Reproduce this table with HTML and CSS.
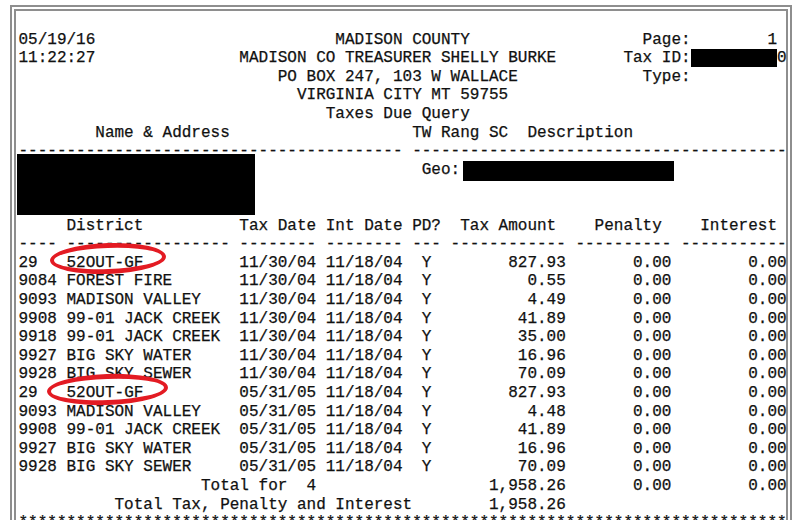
FILE: index.html
```html
<!DOCTYPE html>
<html lang="en">
<head>
<meta charset="utf-8">
<title>Taxes Due Query</title>
<link rel="stylesheet" href="styles.css">
</head>
<body>
<div class="sheet">
<div class="page">
<pre class="report">
05/19/16                         MADISON COUNTY                  Page:        1
11:22:27               MADISON CO TREASURER SHELLY BURKE       Tax ID:<span class="redact">         </span>0
                           PO BOX 247, 103 W WALLACE             Type:
                             VIRGINIA CITY MT 59755
                                Taxes Due Query
        Name &amp; Address                   TW Rang SC  Description
---------------------------------------- ---------------------------------------
                                          Geo:<span class="redact redact-geo">                      </span>


     District          Tax Date Int Date PD?  Tax Amount    Penalty    Interest
---- ----------------- -------- -------- --- ------------ ---------- -----------
29   <span class="circled">52OUT-GF</span>          11/30/04 11/18/04  Y        827.93       0.00        0.00
9084 FOREST FIRE       11/30/04 11/18/04  Y          0.55       0.00        0.00
9093 MADISON VALLEY    11/30/04 11/18/04  Y          4.49       0.00        0.00
9908 99-01 JACK CREEK  11/30/04 11/18/04  Y         41.89       0.00        0.00
9918 99-01 JACK CREEK  11/30/04 11/18/04  Y         35.00       0.00        0.00
9927 BIG SKY WATER     11/30/04 11/18/04  Y         16.96       0.00        0.00
9928 BIG SKY SEWER     11/30/04 11/18/04  Y         70.09       0.00        0.00
29   <span class="circled circled-second">52OUT-GF</span>          05/31/05 11/18/04  Y        827.93       0.00        0.00
9093 MADISON VALLEY    05/31/05 11/18/04  Y          4.48       0.00        0.00
9908 99-01 JACK CREEK  05/31/05 11/18/04  Y         41.89       0.00        0.00
9927 BIG SKY WATER     05/31/05 11/18/04  Y         16.96       0.00        0.00
9928 BIG SKY SEWER     05/31/05 11/18/04  Y         70.09       0.00        0.00
                   Total for  4                  1,958.26       0.00        0.00
          Total Tax, Penalty and Interest        1,958.26
********************************************************************************<span class="redact-name"></span></pre>
</div>
</div>
</body>
</html>
```

FILE: styles.css
```css
html,
body {
  margin: 0;
  height: 520px;
  overflow: hidden;
  background: #ffffff;
}

.sheet {
  margin: 5px 8px 0 10px;
  height: 620px;
  border: 2px solid #8e8e8e;
  border-bottom: none;
  padding: 2px 2px 0;
}

.page {
  height: 100%;
  border: 2px solid #8e8e8e;
  border-bottom: none;
  padding: 19.7px 0 0 2.5px;
}

.report {
  position: relative;
  margin: 0;
  font-family: "Courier New", "Liberation Mono", monospace;
  font-size: 16px;
  line-height: 18.6px;
  color: #111111;
  -webkit-text-stroke: 0.25px #111111;
  white-space: pre;
}

.redact {
  background: #000000;
}

.redact-geo {
  margin-left: 3px;
  padding-bottom: 2px;
}

.redact-name {
  position: absolute;
  left: -2px;
  top: 123px;
  width: 238px;
  height: 61px;
  background: #000000;
}

.circled {
  position: relative;
}

.circled::after {
  content: "";
  position: absolute;
  left: -17px;
  top: -11px;
  width: 116px;
  height: 31px;
  box-sizing: border-box;
  border-style: solid;
  border-color: #e31b23;
  border-width: 5px 4px;
  border-radius: 50%;
  transform: rotate(-2deg);
}

.circled-second::after {
  left: -20px;
  top: -10px;
  width: 121px;
  height: 31px;
}
```
